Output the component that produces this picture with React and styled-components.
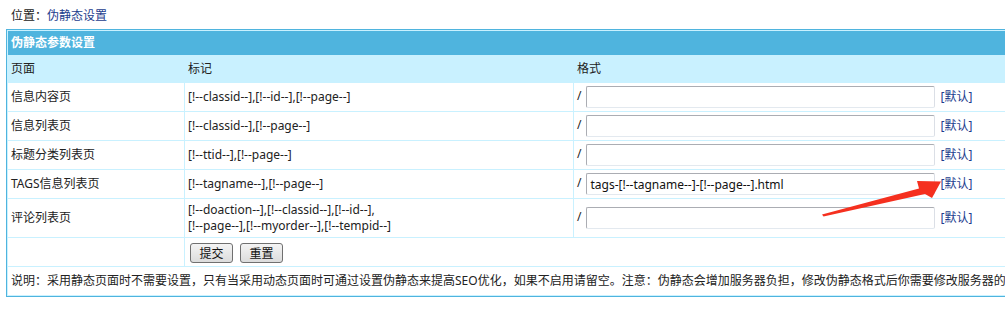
import styled, { createGlobalStyle } from "styled-components"

const GlobalStyle = createGlobalStyle`
    html, body {
        margin: 0;
        padding: 0;
        overflow: hidden;
        background: #fff;
    }
    body {
        font-family: "Noto Sans", "Noto Sans CJK SC", sans-serif;
        font-size: 12px;
        color: #222;
    }
`

const Page = styled.div`
    position: relative;
    width: 1005px;
    height: 310px;
    padding: 0 6px;
    box-sizing: border-box;
`

const Position = styled.div`
    padding: 6px 0 0 5px;
    height: 20px;
    line-height: 20px;
    margin-bottom: 3px;
    white-space: nowrap;
    a {
        color: #1c3d8e;
        text-decoration: none;
    }
`

const Table = styled.table`
    width: 1110px;
    table-layout: fixed;
    border-collapse: separate;
    border-spacing: 1px;
    background: #c9f1ff;
    border: 1px solid #4fb4de;
    td {
        padding: 3px;
        vertical-align: middle;
        line-height: 16px;
        white-space: nowrap;
    }
`

const HeaderRow = styled.tr`
    td {
        height: 18px;
        background: #4fb4de;
        color: #fff;
        font-weight: bold;
    }
`

const TitleRow = styled.tr`
    td {
        height: 20px;
        background: #c9f1ff;
    }
`

const Row = styled.tr`
    td {
        background: #fff;
        height: ${props => props.$tall ? "32px" : "22px"};
    }
`

const Slash = styled.span`
    margin-right: 5px;
`

const FormatInput = styled.input`
    box-sizing: border-box;
    width: 349px;
    height: 22px;
    margin: 0;
    padding: 1px 3px;
    vertical-align: middle;
    font-family: inherit;
    font-size: 12px;
    color: #111;
    border: 1px solid #abadb3;
    border-right-color: #dbdfe6;
    border-bottom-color: #e3e9ef;
    border-radius: 2px;
    outline: none;
`

const DefaultLink = styled.a`
    margin-left: 5px;
    color: #1c3d8e;
    text-decoration: none;
    vertical-align: middle;
`

const ButtonBar = styled.div`
    display: flex;
    gap: 7px;
    padding: 1px 0 0 2px;
`

const Button = styled.button`
    box-sizing: border-box;
    width: 43px;
    height: 20px;
    margin: 0;
    padding: 0;
    font-family: inherit;
    font-size: 12px;
    color: #111;
    background: linear-gradient(#f4f4f4, #dcdcdc);
    border: 1px solid #707070;
    border-radius: 3px;
`

const Arrow = styled.svg`
    position: absolute;
    left: 0;
    top: 0;
    width: 1005px;
    height: 310px;
    pointer-events: none;
`

const rows = [
    { page: "信息内容页", tags: "[!--classid--],[!--id--],[!--page--]", value: "" },
    { page: "信息列表页", tags: "[!--classid--],[!--page--]", value: "" },
    { page: "标题分类列表页", tags: "[!--ttid--],[!--page--]", value: "" },
    { page: "TAGS信息列表页", tags: "[!--tagname--],[!--page--]", value: "tags-[!--tagname--]-[!--page--].html" },
]

export default function App() {
    return (
        <>
            <GlobalStyle />
            <Page>
                <Position>位置：<a href="#">伪静态设置</a></Position>
                <Table>
                    <colgroup>
                        <col style={{ width: "176px" }} />
                        <col style={{ width: "388px" }} />
                        <col />
                    </colgroup>
                    <tbody>
                        <HeaderRow>
                            <td colSpan={3}>伪静态参数设置</td>
                        </HeaderRow>
                        <TitleRow>
                            <td>页面</td>
                            <td>标记</td>
                            <td>格式</td>
                        </TitleRow>
                        {rows.map((r, i) => (
                            <Row key={i}>
                                <td>{r.page}</td>
                                <td>{r.tags}</td>
                                <td>
                                    <Slash>/</Slash>
                                    <FormatInput defaultValue={r.value} />
                                    <DefaultLink href="#">[默认]</DefaultLink>
                                </td>
                            </Row>
                        ))}
                        <Row $tall>
                            <td>评论列表页</td>
                            <td>
                                [!--doaction--],[!--classid--],[!--id--],<br />
                                [!--page--],[!--myorder--],[!--tempid--]
                            </td>
                            <td>
                                <Slash>/</Slash>
                                <FormatInput defaultValue="" />
                                <DefaultLink href="#">[默认]</DefaultLink>
                            </td>
                        </Row>
                        <Row>
                            <td></td>
                            <td colSpan={2}>
                                <ButtonBar>
                                    <Button>提交</Button>
                                    <Button>重置</Button>
                                </ButtonBar>
                            </td>
                        </Row>
                        <Row>
                            <td colSpan={3}>
                                说明：采用静态页面时不需要设置，只有当采用动态页面时可通过设置伪静态来提高SEO优化，如果不启用请留空。注意：伪静态会增加服务器负担，修改伪静态格式后你需要修改服务器的Rewrite规则设置。
                            </td>
                        </Row>
                    </tbody>
                </Table>
                <Arrow viewBox="0 0 1005 310">
                    <polygon
                        points="822,214.5 919,188.5 917,181 941,181.5 932,198 925,194 823.5,216.5"
                        fill="#f5301f"
                    />
                </Arrow>
            </Page>
        </>
    )
}
